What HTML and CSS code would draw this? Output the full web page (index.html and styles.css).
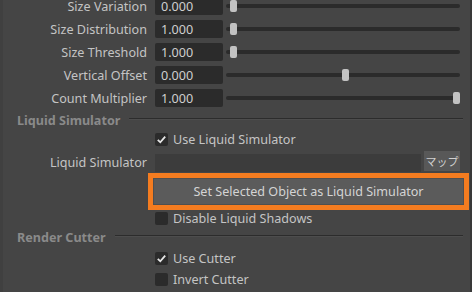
FILE: index.html
```html
<!DOCTYPE html>
<html>
<head>
<meta charset="utf-8">
<link rel="stylesheet" href="styles.css">
</head>
<body>
<div class="panel">
  <div class="attrs">
    <div class="row"><span class="label">Size Variation</span><span class="field">0.000</span><div class="slider"><span class="thumb" style="--v:0"></span></div></div>
    <div class="row"><span class="label">Size Distribution</span><span class="field">1.000</span><div class="slider"><span class="thumb" style="--v:0"></span></div></div>
    <div class="row"><span class="label">Size Threshold</span><span class="field">1.000</span><div class="slider"><span class="thumb" style="--v:0"></span></div></div>
    <div class="row"><span class="label">Vertical Offset</span><span class="field">0.000</span><div class="slider"><span class="thumb" style="--v:0.5"></span></div></div>
    <div class="row"><span class="label">Count Multiplier</span><span class="field">1.000</span><div class="slider"><span class="thumb" style="--v:1"></span></div></div>
  </div>

  <div class="section sec-liquid"><span class="section-title">Liquid Simulator</span><span class="rule"></span></div>
  <div class="check-row cr-use-liquid"><span class="box"><svg viewBox="0 0 13 13" width="13" height="13"><polyline points="2.8,6.8 5.3,9.3 10.2,3.6" fill="none" stroke="#e6e6e6" stroke-width="1.8"/></svg></span><span class="check-label">Use Liquid Simulator</span></div>
  <div class="map-row"><span class="label">Liquid Simulator</span><span class="wide-field"></span><span class="map-btn">マップ</span></div>
  <div class="highlight"><div class="action-btn">Set Selected Object as Liquid Simulator</div></div>
  <div class="check-row cr-disable"><span class="box"></span><span class="check-label">Disable Liquid Shadows</span></div>

  <div class="section sec-cutter"><span class="section-title">Render Cutter</span><span class="rule"></span></div>
  <div class="check-row cr-use-cutter"><span class="box"><svg viewBox="0 0 13 13" width="13" height="13"><polyline points="2.8,6.8 5.3,9.3 10.2,3.6" fill="none" stroke="#e6e6e6" stroke-width="1.8"/></svg></span><span class="check-label">Use Cutter</span></div>
  <div class="check-row cr-invert"><span class="box"></span><span class="check-label">Invert Cutter</span></div>
</div>
</body>
</html>
```

FILE: styles.css
```css
html, body {
  margin: 0;
  padding: 0;
  background: #444444;
}

.panel {
  width: 472px;
  height: 292px;
  box-sizing: border-box;
  overflow: hidden;
  background: #454545;
  border-left: 3px solid #404040;
  border-right: 2px solid #393939;
  font-family: "Noto Sans", "Open Sans", sans-serif;
  font-size: 12.6px;
  color: #c4c4c4;
}

.attrs {
  margin-top: -3px;
  display: flex;
  flex-direction: column;
  gap: 5px;
}

.row {
  display: flex;
  align-items: center;
  height: 18px;
}

.label {
  width: 144px;
  text-align: right;
  margin-right: 8px;
  white-space: nowrap;
  line-height: 18px;
  padding-top: 2px;
}

.field {
  width: 68px;
  height: 18px;
  box-sizing: border-box;
  background: #2b2b2b;
  border-radius: 2px;
  padding-left: 6px;
  padding-top: 1px;
  line-height: 17px;
  color: #cfcfcf;
}

.slider {
  position: relative;
  margin-left: 3px;
  width: 234px;
  height: 4px;
  border-radius: 2px;
  background: #2b2b2b;
}

.thumb {
  position: absolute;
  top: -4px;
  left: calc(4px + var(--v) * 223px);
  width: 7px;
  height: 12px;
  border-radius: 2px;
  background: #c2c2c2;
}

.section {
  display: flex;
  align-items: center;
  height: 16px;
  padding-left: 14px;
}

.sec-liquid { margin-top: 5px; }
.sec-cutter { margin-top: 4px; }

.section-title {
  font-weight: bold;
  color: #8a8a8a;
  white-space: nowrap;
  margin-right: 9px;
}

.rule {
  flex: 1;
  margin-right: 7px;
  margin-top: -3px;
  height: 1px;
  background: #2c2c2c;
  border-bottom: 1px solid #4d4d4d;
}

.check-row {
  display: flex;
  align-items: center;
  height: 13px;
  padding-left: 152px;
}

.cr-use-liquid { margin-top: 5px; }
.cr-disable { margin-top: 2px; }
.cr-use-cutter { margin-top: 7px; }
.cr-invert { margin-top: 8px; }

.box {
  width: 13px;
  height: 13px;
  border-radius: 2px;
  background: #2b2b2b;
  margin-right: 5px;
  flex: none;
}

.box svg { display: block; }

.check-label {
  white-space: nowrap;
  line-height: 13px;
}

.map-row {
  display: flex;
  align-items: flex-end;
  height: 21px;
  margin-top: 5px;
}

.map-row .label {
  align-self: center;
  margin-top: 3px;
  padding-top: 0;
}

.wide-field {
  width: 266px;
  height: 18px;
  background: #3c3c3c;
  margin-right: 3px;
}

.map-btn {
  align-self: flex-start;
  width: 36px;
  height: 20px;
  background: #585858;
  font-family: "Noto Sans CJK JP", "Noto Sans", sans-serif;
  font-size: 11px;
  line-height: 20px;
  text-align: center;
  color: #d0d0d0;
}

.highlight {
  margin-top: 1px;
  margin-left: 145px;
  width: 321px;
  height: 37px;
  box-sizing: border-box;
  border: 5px solid #f47c20;
}

.action-btn {
  height: 100%;
  box-sizing: border-box;
  background: #5b5b5b;
  border: 1px solid #4f4f4f;
  text-align: center;
  line-height: 25px;
  color: #d4d4d4;
  white-space: nowrap;
}
```
